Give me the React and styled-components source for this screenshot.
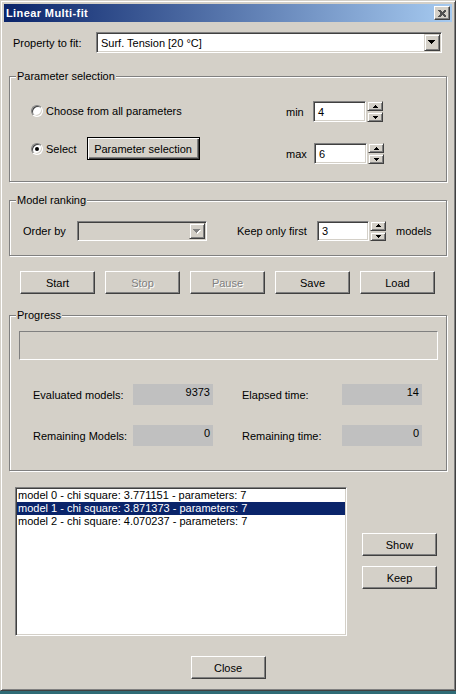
import React from "react";
import styled, { createGlobalStyle, css } from "styled-components";

const GlobalStyle = createGlobalStyle`
  html, body {
    margin: 0;
    padding: 0;
    background: #2f6b76;
  }
  body {
    font-family: "Liberation Sans", Arial, sans-serif;
    font-size: 11px;
    color: #000;
  }
  * {
    box-sizing: border-box;
  }
`;

const raised = css`
  background: #d4d0c8;
  border: 1px solid;
  border-color: #fff #404040 #404040 #fff;
  box-shadow: inset -1px -1px #808080, inset 1px 1px #d4d0c8;
`;

const sunken = css`
  border: 1px solid;
  border-color: #808080 #fff #fff #808080;
  box-shadow: inset 1px 1px #404040, inset -1px -1px #d4d0c8;
`;

const Window = styled.div`
  width: 456px;
  height: 691px;
  padding: 3px;
  display: flex;
  flex-direction: column;
  background: #d4d0c8;
  border: 1px solid;
  border-color: #d4d0c8 #404040 #404040 #d4d0c8;
  box-shadow: inset 1px 1px #fff, inset -1px -1px #808080;
`;

const TitleBar = styled.div`
  height: 18px;
  flex-shrink: 0;
  display: flex;
  align-items: center;
  justify-content: space-between;
  padding: 0 2px 0 2px;
  background: linear-gradient(to right, #0a246a, #a6caf0);
`;

const Title = styled.span`
  color: #fff;
  font-weight: bold;
  font-size: 11px;
  letter-spacing: 0.4px;
`;

const CloseBox = styled.div`
  ${raised};
  width: 16px;
  height: 14px;
  display: flex;
  align-items: center;
  justify-content: center;
`;

const Body = styled.div`
  flex: 1;
  display: flex;
  flex-direction: column;
  padding: 0 5px;
`;

const PropertyRow = styled.div`
  display: flex;
  align-items: center;
  margin-top: 10px;
  padding-left: 4px;
`;

const Label = styled.span`
  width: ${(p) => p.$w}px;
  margin-left: ${(p) => p.$ml || 0}px;
  flex-shrink: 0;
  white-space: nowrap;
`;

const Combo = styled.div`
  ${sunken};
  width: ${(p) => p.$w}px;
  height: ${(p) => p.$h}px;
  padding: 1px;
  display: flex;
  align-items: stretch;
  background: ${(p) => (p.$disabled ? "#d4d0c8" : "#fff")};
`;

const ComboText = styled.span`
  flex: 1;
  padding-left: 3px;
  display: flex;
  align-items: center;
`;

const DropButton = styled.span`
  width: 16px;
  background: #d4d0c8;
  border: 1px solid;
  border-color: #d4d0c8 #404040 #404040 #d4d0c8;
  box-shadow: inset 1px 1px #fff, inset -1px -1px #808080;
  display: flex;
  align-items: center;
  justify-content: center;
`;

const Group = styled.div`
  position: relative;
  margin-top: ${(p) => p.$top}px;
  padding: ${(p) => p.$pad};
  border: 1px solid #808080;
  box-shadow: inset 1px 1px #fff, 1px 1px #fff;
`;

const Caption = styled.span`
  position: absolute;
  top: -7px;
  left: 6px;
  padding: 0 1px;
  line-height: 13px;
  background: #d4d0c8;
`;

const SelectionLayout = styled.div`
  display: flex;
`;

const LeftCol = styled.div`
  width: 255px;
  display: flex;
  flex-direction: column;
  gap: 15px;
`;

const RightCol = styled.div`
  display: flex;
  flex-direction: column;
  padding-top: 1px;
  gap: 21px;
`;

const Row = styled.div`
  display: flex;
  align-items: center;
  height: ${(p) => p.$h}px;
`;

const RadioCircle = styled.span`
  ${sunken};
  width: 12px;
  height: 12px;
  border-radius: 50%;
  background: #fff;
  display: flex;
  align-items: center;
  justify-content: center;
  flex-shrink: 0;

  &::after {
    content: "";
    width: 4px;
    height: 4px;
    border-radius: 50%;
    background: #000;
    display: ${(p) => (p.$checked ? "block" : "none")};
  }
`;

const RadioText = styled.span`
  margin-left: 3px;
`;

const Button = styled.button`
  ${raised};
  width: ${(p) => p.$w || 75}px;
  height: 23px;
  margin-left: ${(p) => p.$ml || 0}px;
  padding: 0;
  font-family: "Liberation Sans", Arial, sans-serif;
  font-size: 11px;
  color: #000;

  ${(p) =>
    p.$default &&
    css`
      border-color: #000;
      box-shadow: inset 1px 1px #fff, inset -1px -1px #404040,
        inset -2px -2px #808080;
    `}

  &:disabled {
    color: #808080;
    text-shadow: 1px 1px #fff;
  }
`;

const Edit = styled.div`
  ${sunken};
  width: ${(p) => p.$w}px;
  height: ${(p) => p.$h}px;
  background: #fff;
  padding: 0 4px;
  display: flex;
  align-items: center;
`;

const Spin = styled.div`
  width: 16px;
  height: ${(p) => p.$h}px;
  margin-left: ${(p) => p.$ml}px;
  display: flex;
  flex-direction: column;
  gap: 1px;
`;

const SpinHalf = styled.span`
  flex: 1;
  background: #d4d0c8;
  border: 1px solid;
  border-color: #d4d0c8 #404040 #404040 #d4d0c8;
  box-shadow: inset 1px 1px #fff, inset -1px -1px #808080;
  display: flex;
  align-items: center;
  justify-content: center;
`;

const ButtonRow = styled.div`
  display: flex;
  gap: 10px;
  margin-top: 15px;
  margin-left: 11px;
`;

const ProgressBar = styled.div`
  height: 29px;
  border: 1px solid;
  border-color: #808080 #fff #fff #808080;
`;

const Stats = styled.div`
  margin-top: 24px;
  margin-left: 14px;
  display: flex;
  flex-direction: column;
  gap: 20px;
`;

const StatRow = styled.div`
  display: flex;
  gap: 29px;
`;

const StatPair = styled.div`
  display: flex;
  align-items: center;
`;

const StatLabel = styled.span`
  width: 100px;
  padding-top: 1px;
`;

const StatValue = styled.span`
  width: 80px;
  height: 21px;
  background: #c0c0c0;
  text-align: right;
  padding: 2px 3px 0 0;
  line-height: 13px;
`;

const ListArea = styled.div`
  display: flex;
  margin-top: 16px;
  margin-left: 6px;
`;

const ListBox = styled.div`
  ${sunken};
  width: 332px;
  height: 149px;
  padding: 1px;
  background: #fff;
`;

const ListItem = styled.div`
  height: 13px;
  line-height: 13px;
  padding-left: 1px;
  white-space: nowrap;
  background: ${(p) => (p.$selected ? "#0a246a" : "transparent")};
  color: ${(p) => (p.$selected ? "#fff" : "#000")};
`;

const SideButtons = styled.div`
  display: flex;
  flex-direction: column;
  gap: 10px;
  margin-left: 15px;
  padding-top: 46px;
`;

const CloseRow = styled.div`
  display: flex;
  justify-content: center;
  margin-top: 20px;
`;

const Arrow = ({ w = 7, h = 4, color = "#000", shadow }) => (
  <svg width={w + 1} height={h + 1} viewBox={`0 0 ${w + 1} ${h + 1}`} shapeRendering="crispEdges">
    {shadow && <polygon points={`1,1 ${w + 1},1 ${(w + 2) / 2},${h + 1}`} fill="#fff" />}
    <polygon points={`0,0 ${w},0 ${w / 2},${h}`} fill={color} />
  </svg>
);

const UpArrow = () => (
  <svg width="5" height="3" viewBox="0 0 5 3" shapeRendering="crispEdges">
    <rect x="2" y="0" width="1" height="1" fill="#000" />
    <rect x="1" y="1" width="3" height="1" fill="#000" />
    <rect x="0" y="2" width="5" height="1" fill="#000" />
  </svg>
);

const DownArrow = () => (
  <svg width="5" height="3" viewBox="0 0 5 3" shapeRendering="crispEdges">
    <rect x="0" y="0" width="5" height="1" fill="#000" />
    <rect x="1" y="1" width="3" height="1" fill="#000" />
    <rect x="2" y="2" width="1" height="1" fill="#000" />
  </svg>
);

const Spinner = ({ h = 21, ml = 1 }) => (
  <Spin $h={h} $ml={ml}>
    <SpinHalf>
      <UpArrow />
    </SpinHalf>
    <SpinHalf>
      <DownArrow />
    </SpinHalf>
  </Spin>
);

const Radio = ({ checked, children }) => (
  <>
    <RadioCircle $checked={checked} />
    <RadioText>{children}</RadioText>
  </>
);

const models = [
  "model 0 - chi square: 3.771151 - parameters: 7",
  "model 1 - chi square: 3.871373 - parameters: 7",
  "model 2 - chi square: 4.070237 - parameters: 7",
];

export default function App() {
  return (
    <>
      <GlobalStyle />
      <Window>
        <TitleBar>
          <Title>Linear Multi-fit</Title>
          <CloseBox>
            <svg width="8" height="7" viewBox="0 0 8 7" shapeRendering="crispEdges">
              <path d="M0 0h2l2 2 2-2h2v1l-2 2v1l2 2v1h-2l-2-2-2 2h-2v-1l2-2v-1l-2-2z" fill="#505050" />
            </svg>
          </CloseBox>
        </TitleBar>

        <Body>
          <PropertyRow>
            <Label $w={83}>Property to fit:</Label>
            <Combo $w={346} $h={21}>
              <ComboText>Surf. Tension [20 °C]</ComboText>
              <DropButton>
                <Arrow />
              </DropButton>
            </Combo>
          </PropertyRow>

          <Group $top={23} $pad="23px 0 17px 21px">
            <Caption>Parameter selection</Caption>
            <SelectionLayout>
              <LeftCol>
                <Row $h={22}>
                  <Radio>Choose from all parameters</Radio>
                </Row>
                <Row $h={23}>
                  <Radio checked>Select</Radio>
                  <Button $w={113} $ml={10} $default>
                    Parameter selection
                  </Button>
                </Row>
              </LeftCol>
              <RightCol>
                <Row $h={21}>
                  <Label $w={27}>min</Label>
                  <Edit $w={53} $h={21}>4</Edit>
                  <Spinner />
                </Row>
                <Row $h={21}>
                  <Label $w={28}>max</Label>
                  <Edit $w={53} $h={21}>6</Edit>
                  <Spinner />
                </Row>
              </RightCol>
            </SelectionLayout>
          </Group>

          <Group $top={18} $pad="20px 0 14px 13px">
            <Caption>Model ranking</Caption>
            <Row $h={20}>
              <Label $w={54}>Order by</Label>
              <Combo $w={130} $h={20} $disabled>
                <ComboText />
                <DropButton>
                  <Arrow color="#808080" shadow />
                </DropButton>
              </Combo>
              <Label $w={80} $ml={30}>
                Keep only first
              </Label>
              <Edit $w={52} $h={20}>3</Edit>
              <Spinner h={20} ml={1} />
              <Label $ml={10}>models</Label>
            </Row>
          </Group>

          <ButtonRow>
            <Button>Start</Button>
            <Button disabled>Stop</Button>
            <Button disabled>Pause</Button>
            <Button>Save</Button>
            <Button>Load</Button>
          </ButtonRow>

          <Group $top={21} $pad="15px 8px 24px 9px">
            <Caption>Progress</Caption>
            <ProgressBar />
            <Stats>
              <StatRow>
                <StatPair>
                  <StatLabel>Evaluated models:</StatLabel>
                  <StatValue>9373</StatValue>
                </StatPair>
                <StatPair>
                  <StatLabel>Elapsed time:</StatLabel>
                  <StatValue>14</StatValue>
                </StatPair>
              </StatRow>
              <StatRow>
                <StatPair>
                  <StatLabel>Remaining Models:</StatLabel>
                  <StatValue>0</StatValue>
                </StatPair>
                <StatPair>
                  <StatLabel>Remaining time:</StatLabel>
                  <StatValue>0</StatValue>
                </StatPair>
              </StatRow>
            </Stats>
          </Group>

          <ListArea>
            <ListBox>
              {models.map((m, i) => (
                <ListItem key={m} $selected={i === 1}>
                  {m}
                </ListItem>
              ))}
            </ListBox>
            <SideButtons>
              <Button>Show</Button>
              <Button>Keep</Button>
            </SideButtons>
          </ListArea>

          <CloseRow>
            <Button>Close</Button>
          </CloseRow>
        </Body>
      </Window>
    </>
  );
}
